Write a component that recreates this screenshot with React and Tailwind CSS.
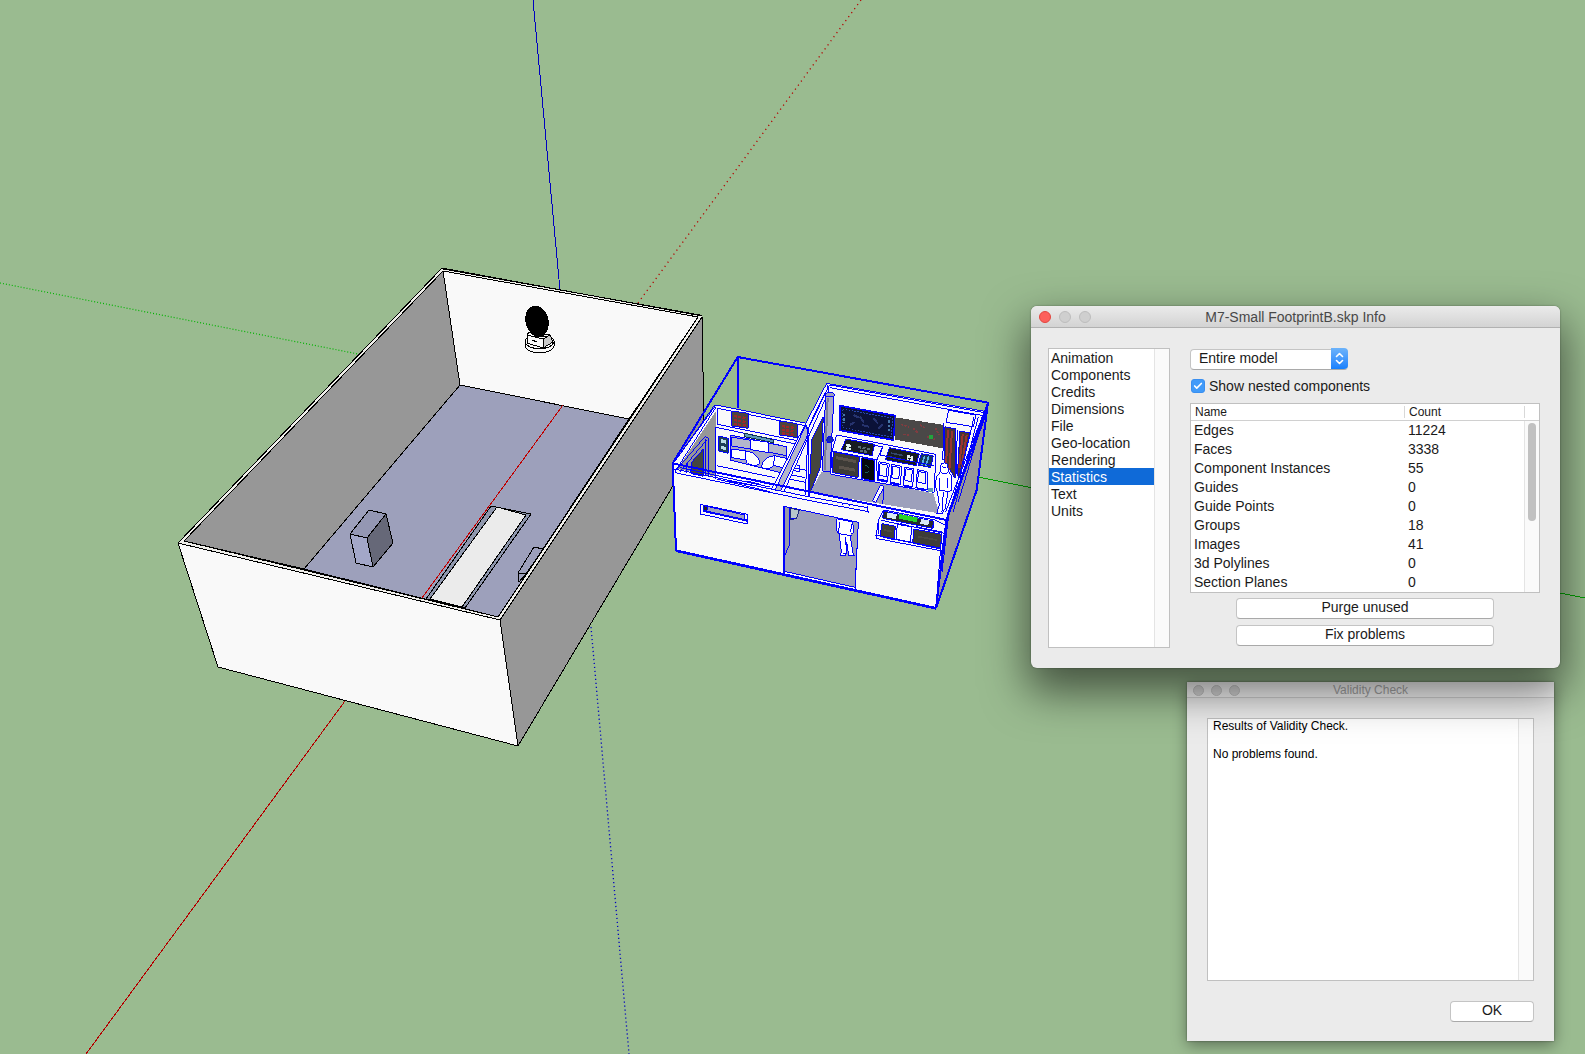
import React, { useState } from 'react';
import { Check } from 'lucide-react';

const SECTIONS = [
  'Animation',
  'Components',
  'Credits',
  'Dimensions',
  'File',
  'Geo-location',
  'Rendering',
  'Statistics',
  'Text',
  'Units',
];

const STATS = [
  ['Edges', '11224'],
  ['Faces', '3338'],
  ['Component Instances', '55'],
  ['Guides', '0'],
  ['Guide Points', '0'],
  ['Groups', '18'],
  ['Images', '41'],
  ['3d Polylines', '0'],
  ['Section Planes', '0'],
];

const Axes = () => (
  <g fill="none" strokeWidth="1">
    <path d="M533 0L560 290" stroke="#0000c0" />
    <g shapeRendering="geometricPrecision">
      <path d="M861 0L638 303" stroke="#b40000" strokeWidth="1.3" strokeDasharray="1.2 3.8" />
      <path d="M0 283L358 354" stroke="#00b400" strokeWidth="1.2" strokeDasharray="1 2" />
      <path d="M591 627L629 1054" stroke="#0000c0" strokeWidth="1.3" strokeDasharray="1.2 2.8" />
    </g>
    <path d="M345 701L86 1054" stroke="#b40000" />
    <path d="M978 477L1585 598" stroke="#00a000" />
  </g>
);

const Room = () => (
  <g stroke="#000" strokeWidth="1" strokeLinejoin="round">
    {/* outer shell and rim */}
    <path d="M442 268L702 316L704 426L674 484L518 746L218 667L178 543Z" fill="#f0efeb" />
    <path d="M500 620L702 317L704 426L674 484L518 746Z" fill="#979797" />
    <path d="M178 543L500 620L518 746L218 667Z" fill="#f9f9f9" />
    {/* inside walls */}
    <path d="M443 271L460 385L304 569L184 541Z" fill="#979797" />
    <path d="M443 271L698 317L629 419L460 385Z" fill="#f9f9f9" />
    <path d="M443 269L700 315" />
    {/* floor */}
    <path d="M460 385L629 419L498 617L304 569Z" fill="#9da0bb" />
    <path d="M443 271L184 541L498 617L698 317" fill="none" />
    <path d="M563 405L422 598" stroke="#c00000" />

    {/* slab in the floor */}
    <path d="M491 506L531 514L465 608L426 599Z" fill="#8f97ad" />
    <path d="M497 507L526 515L462 607L430 599Z" fill="#ebebeb" />

    {/* boxes */}
    <path d="M369 510L386 514L367 538L350 534Z" fill="#9497b3" />
    <path d="M350 534L367 538L373 567L356 563Z" fill="#a3a7c8" />
    <path d="M386 514L393 543L373 567L367 538Z" fill="#666878" />
    <path d="M543 549L534 547L518 573L519 582L526 574Z" fill="#9da0bb" />
    <path d="M518 573L526 574" />

    {/* dish */}
    <path d="M525 341v5c2 9 27 9 29 0v-5c-2-8-27-8-29 0Z" fill="#f9f9f9" />
    <path d="M525 342c3 9 26 9 29 0" fill="none" />
    <path d="M527 334L530 332L550 335L553 342L543 348L527 343Z" fill="#f9f9f9" />
    <path d="M543 339L550 335L553 342L543 348Z" fill="#c8c8c8" />
    <path d="M527 335L543 339M532 340L537 342M531 333L537 337L546 336" />
    <ellipse cx="537" cy="321" rx="11" ry="15" transform="rotate(-14 537 321)" fill="#000" />
  </g>
);

// Drawn on a grid three times finer than the page
const Station = () => (
  <g transform="translate(660 345) scale(0.33333)" stroke="#0000ff" strokeWidth="3" fill="none">
    {/* shell */}
    <path d="M38 358L168 180L440 235L500 115L980 200L950 435L828 790L368 688L48 617Z" fill="#f9f9f9" />
    <path d="M52 372L168 198V395Z" fill="#979797" stroke="none" />
    <path d="M980 200L950 435L828 790L852 560L865 500Z" fill="#979797" />

    {/* left room, back wall */}
    <path d="M172 190L440 243M172 190V238M172 238L436 292M168 247L436 303M168 247V402" />
    <path d="M170 362L345 398M170 382L340 420M170 402L330 440M390 366L440 376M380 400L436 412M370 385L436 398" />
    <path d="M215 198L265 205V250L215 243Z" fill="#4c4542" />
    <path d="M360 228L412 236V278L360 270Z" fill="#4c4542" />
    <path d="M222 213L258 219M222 225L258 231M222 237L258 242M366 243L405 249M366 254L405 260M366 265L405 270" stroke="#a02828" strokeWidth="7" strokeDasharray="9 4" />
    <path d="M176 273L205 280V325L176 318Z" fill="#1c3e58" />
    <path d="M182 282L198 286V296L182 292ZM182 302L198 306V316L182 312Z" fill="#b8dce8" stroke="none" />
    <path d="M254 265L340 284V293L254 275Z" fill="#5c9ab8" stroke="#10304c" />
    <path d="M211 270L380 305V388L211 345Z" fill="#a7a9c6" />
    <path d="M215 276L272 286V312L215 303ZM327 295L380 305V332L327 322Z" fill="#b4b6cc" />
    <path d="M272 284L327 292V323L272 314Z" fill="#fff" />
    <path d="M216 312L258 318V345L216 338ZM342 332L380 340V370L342 362Z" fill="#fff" />
    <path d="M258 318c22 2 38 16 42 38c-14 10-40 4-42-12ZM344 332c-22 2-38 16-39 34c14 10 32 4 36-8Z" fill="#fff" />
    <path d="M397 358L420 363V380L397 376Z" />

    {/* left doorway */}
    <path d="M92 385L96 350L130 312V394Z" fill="#45463f" />
    <path d="M45 380L135 275M60 380L140 285M78 385L82 355M135 275L147 280V392M138 282V390" />
    <path d="M45 380L168 186M38 358L164 180" />

    {/* partition */}
    <path d="M500 118L335 432L372 440L500 180Z" fill="#f9f9f9" stroke="none" />
    <path d="M438 240L345 435L362 438L447 262Z" fill="#b4b6c8" />
    <path d="M500 115L335 432M508 120L440 262M497 160L372 440M497 140L448 240M436 240L444 260L436 450M447 270V455" />
    <path d="M490 215L455 285L447 452L482 365Z" fill="#45463f" />

    {/* right room */}
    <path d="M510 120L985 205M510 128L970 212M500 115L512 160" />
    <path d="M485 380L516 380L640 410L820 445L838 505L450 442Z" fill="#9da0bb" stroke="none" />
    <path d="M497 150L487 378L510 380L522 150Z" fill="#a8aac4" />
    <path d="M503 160L494 375" stroke="#7c7e96" strokeWidth="6" />
    <ellipse cx="510" cy="149" rx="13" ry="7" fill="#9da0bb" />
    <circle cx="510" cy="284" r="10" fill="#1428b4" />
    <path d="M540 182L706 212L700 285L540 256Z" fill="#0b1238" strokeWidth="5" />
    <path d="M548 192L698 220L693 276L548 248Z" stroke="#2848b0" strokeDasharray="5 4" />
    <path d="M580 210l18 8M605 240l22 5M640 220l14 16M655 250l14-12M600 215l12 18M570 240l14-9" stroke="#26336e" strokeWidth="6" />
    <path d="M553 206V235M687 226V258" stroke="#4878a8" strokeWidth="7" strokeDasharray="8 5" />
    <path d="M706 217L852 240L848 310L706 284Z" fill="#4a4847" stroke="none" />
    <path d="M722 238l25 8M760 250l14 14M730 268l22 4M780 240l18 10M800 275l24 8M826 248l12 22" stroke="#803c40" strokeWidth="5" strokeDasharray="7 4" />
    <path d="M806 270h14v12h-14Z" fill="#23a43c" stroke="none" />
    <path d="M866 196L948 210L940 245L858 232Z" fill="#f9f9f9" />
    <path d="M854 245L888 252L885 400L852 345ZM900 258L930 264L900 400L892 390Z" fill="#493535" />
    <path d="M864 255L858 360M876 258L868 375M908 268L897 370M920 270L904 370" stroke="#9a3430" strokeWidth="6" />
    <path d="M852 235L848 345M942 215L930 270L872 490M892 255L888 390M955 215L880 500M972 215L895 470M980 205L865 515M968 212L857 500" />

    {/* consoles */}
    <path d="M530 270L828 328L822 442L512 388L516 318Z" fill="#f9f9f9" />
    <path d="M558 282L644 298L636 332L544 314Z" fill="#181c22" />
    <path d="M558 300l14 3M558 310l14 3" stroke="#e0f4f0" strokeWidth="8" />
    <path d="M595 306L630 313M600 317L622 321" stroke="#5a6c78" strokeWidth="7" strokeDasharray="9 4" />
    <path d="M688 308L778 326L768 362L676 344Z" fill="#181c22" />
    <path d="M742 334l20 4M740 344l20 4" stroke="#e8f0f0" strokeWidth="8" strokeDasharray="8 2" />
    <path d="M692 324L730 332M690 336L728 344" stroke="#32486e" strokeWidth="5" />
    <path d="M784 326L820 332L812 368L774 360Z" fill="#16365c" />
    <path d="M794 332l-8 28M806 334l-8 28" stroke="#58b0e8" strokeWidth="5" />
    <path d="M520 320L598 336L594 398L516 382Z" fill="#3d3b37" />
    <path d="M528 338L588 350M536 366L586 376" stroke="#5a524b" strokeWidth="9" />
    <path d="M606 338L644 346L642 408L603 400Z" fill="#06090c" />
    <path d="M616 360l12 8M614 385l14-6" stroke="#1a5a58" strokeWidth="3" />
    <path d="M640 300L668 306L650 344L652 408M668 306L660 330L822 362M516 318L655 345" />
    <g fill="#f9f9f9">
      <path d="M656 350L688 356L682 412L654 406ZM696 358L726 364L720 420L691 414ZM734 366L762 372L758 426L730 421ZM772 374L802 380L802 434L768 428Z" />
      <path d="M660 356L682 360L678 395L658 391ZM699 364L720 368L716 402L695 398ZM737 371L757 375L754 410L734 406ZM775 379L797 384L797 416L773 412Z" />
    </g>
    <path d="M656 404l24 5M694 414l24 5M732 422l24 5M770 430l24 5" strokeWidth="7" />
    <path d="M804 430h16v12h-16Z" fill="#5c9ab8" stroke="none" />

    {/* front room divider and top edges */}
    <path d="M662 420L672 425L648 472L638 468Z" fill="#f9f9f9" />
    <path d="M672 425L668 478" />
    <path d="M45 383L450 467L625 500M42 372L450 456L622 488M60 368L330 426M200 407l80 15M260 408l40 10" />
    <path d="M622 483L625 504" />

    {/* slot window */}
    <path d="M121 478L262 508V537L121 507Z" fill="#f9f9f9" />
    <path d="M132 482L254 510V526L132 500Z" fill="#9da0bb" />
    <path d="M132 482l12 3l-4 15l-8-2Z" fill="#222" />
    <path d="M132 498L262 527" strokeWidth="6" />

    {/* doorway */}
    <path d="M373 484L595 532L585 727L373 679Z" fill="#9da0bb" />
    <path d="M373 484L390 488L388 600L375 630Z" fill="#9799a8" />
    <path d="M392 490L418 496L410 520L392 524Z" fill="#b8c8cc" stroke="#1c2880" />
    <path d="M388 488V600M392 520h14" />
    <path d="M371 484V686" strokeWidth="6" />
    <path d="M373 690L585 737" />
    <path d="M595 532L585 737" />
    <path d="M547 478c8-6 18-4 22 4" />

    {/* figure in the doorway */}
    <g fill="#fff">
      <path d="M530 521L578 531L582 562L570 570L579 625L585 632H566L560 590L558 625L556 632H541L544 620L538 570L530 558Z" />
      <path d="M538 530L536 566L575 572M575 536L572 560M558 575V600M548 625h12" />
    </g>

    {/* front console */}
    <path d="M670 495L824 525L856 540L846 618L648 580L655 525Z" fill="#f9f9f9" />
    <path d="M670 498L820 528L818 550L668 520Z" fill="#262a2e" />
    <path d="M681 510l28 5M782 529l24 5" stroke="#d8e8f4" strokeWidth="15" />
    <path d="M717 514L772 525" stroke="#28d228" strokeWidth="14" />
    <path d="M666 536L706 544L702 584L660 574ZM762 552L846 568L840 612L758 594Z" fill="#3e3d38" />
    <path d="M672 555l24 5M775 575l56 10" stroke="#4b4943" strokeWidth="5" />
    <path d="M712 538L756 546L750 592L708 584Z" fill="#fff" />
    <path d="M664 526L854 565M720 536L748 542M768 545L850 562M646 570L844 610M655 525V568M820 528V548" />
    <path d="M846 560L828 785M865 520L846 680" />

    {/* standing figure */}
    <g fill="#fff">
      <path d="M843 365C838 350 866 350 863 365L866 380L876 394V435L864 440L856 490L846 506H830L838 480L832 440L825 420L830 394L842 380Z" />
      <path d="M842 380c6 8 18 8 22 0M838 400V435L868 440M850 442L846 500M862 400v30M846 365l12 4" />
    </g>

    {/* selection bounds */}
    <g strokeWidth="6">
      <path d="M38 355L233 36L984 173L950 435L828 790M233 36V190M38 355L860 525L984 173M860 525L828 790M38 355L48 617" />
      <path d="M48 617L368 688L828 790" strokeWidth="8" />
    </g>
  </g>
);

const Light = ({ className, label }) => (
  <button aria-label={label} className={`rounded-full border ${className}`} />
);

const PushButton = ({ children, className = '' }) => (
  <button className={`h-[21px] rounded border border-[#c4c4c4] border-b-[#a9a9a9] bg-white pb-0.5 text-center leading-[17px] ${className}`}>
    {children}
  </button>
);

const InfoWindow = () => {
  const [section, setSection] = useState('Statistics');
  const [nested, setNested] = useState(true);

  return (
    <section className="absolute left-[1031px] top-[306px] z-20 w-[529px] overflow-visible rounded-md bg-[#ebebeb] text-sm text-[#1a1a1a] shadow-[0_20px_44px_4px_rgba(0,0,0,0.55),0_0_2px_rgba(0,0,0,0.4)]">
      <header className="grid h-[22px] grid-cols-[80px_1fr_80px] items-center rounded-t-md border-b border-[#b1b1b1] bg-linear-to-b from-[#ebebeb] to-[#d3d3d3]">
        <div className="flex gap-2 pl-2">
          <Light label="Close" className="size-3 border-[#e2463f] bg-[#fc605c]" />
          <Light label="Minimize" className="size-3 border-[#bdbdbd] bg-[#cfcfcf]" />
          <Light label="Zoom" className="size-3 border-[#bdbdbd] bg-[#cfcfcf]" />
        </div>
        <h1 className="text-center leading-5 text-[#484848]">M7-Small FootprintB.skp Info</h1>
      </header>

      <div className="flex gap-5 py-5 pl-[17px] pr-5">
        <nav className="flex h-[300px] w-[122px] border border-[#c0c0c0] bg-white">
          <ul className="flex-1">
            {SECTIONS.map((name) => (
              <li key={name}>
                <button
                  onClick={() => setSection(name)}
                  className={`block h-[17px] w-full pl-0.5 text-left leading-[18px] ${
                    section === name ? 'bg-[#0f6ad8] text-white' : ''
                  }`}
                >
                  {name}
                </button>
              </li>
            ))}
          </ul>
          <div className="w-[15px] border-l border-[#e4e4e4] bg-[#fafafa]" />
        </nav>

        <div className="flex-1">
          <div className="relative h-[21px] w-[158px]">
            <select
              aria-label="Scope"
              className="h-full w-full appearance-none rounded border border-[#c4c4c4] border-b-[#a9a9a9] bg-white pb-0.5 pl-2 leading-[17px]"
            >
              <option>Entire model</option>
            </select>
            <span className="pointer-events-none absolute inset-y-0 right-0 flex w-[17px] items-center justify-center rounded-r bg-linear-to-b from-[#6cb3fa] to-[#1580fd]">
              <svg width="9" height="13" viewBox="0 0 9 13" fill="none" stroke="#fff" strokeWidth="1.6">
                <path d="M1.5 4.5L4.5 1.5L7.5 4.5M1.5 8.5L4.5 11.5L7.5 8.5" strokeLinecap="round" strokeLinejoin="round" />
              </svg>
            </span>
          </div>

          <label className="mt-[7px] flex h-5 items-center gap-1 pl-px">
            <span className="relative size-3.5">
              <input
                type="checkbox"
                checked={nested}
                onChange={(e) => setNested(e.target.checked)}
                className="peer block size-3.5 appearance-none rounded-[3px] border border-[#b8b8b8] bg-white checked:border-[#3a8ff0] checked:bg-[#419bf9]"
              />
              <Check className="pointer-events-none absolute inset-0 hidden size-3.5 p-0.5 text-white peer-checked:block" strokeWidth={4} />
            </span>
            Show nested components
          </label>

          <div className="mt-[7px] border border-[#c0c0c0] bg-white">
            <table className="w-full table-fixed border-separate border-spacing-0">
              <colgroup>
                <col />
                <col className="w-[120px]" />
                <col className="w-[15px]" />
              </colgroup>
              <thead>
                <tr className="h-[17px] text-left text-xs leading-[15px]">
                  <th className="border-b border-[#d0d0d0] p-0 pl-1 font-normal">Name</th>
                  <th className="border-b border-[#d0d0d0] p-0 font-normal">
                    <div className="h-3 border-l border-[#d8d8d8] pl-1 leading-3">Count</div>
                  </th>
                  <th className="border-b border-[#d0d0d0] p-0">
                    <div className="h-3 border-l border-[#d8d8d8]" />
                  </th>
                </tr>
              </thead>
              <tbody>
                {STATS.map(([name, count], index) => (
                  <tr key={name} className="h-[19px] leading-[19px]">
                    <td className="p-0 pl-[3px]">{name}</td>
                    <td className="p-0 pl-1">{count}</td>
                    {index === 0 && (
                      <td rowSpan={STATS.length} className="border-l border-[#e4e4e4] bg-[#fafafa] p-0 px-[3px] pt-0.5 align-top">
                        <div className="h-[98px] w-2 rounded-full bg-[#c1c1c1]" />
                      </td>
                    )}
                  </tr>
                ))}
              </tbody>
            </table>
          </div>

          <div className="mt-[5px] flex flex-col gap-1.5 px-[46px]">
            <PushButton>Purge unused</PushButton>
            <PushButton>Fix problems</PushButton>
          </div>
        </div>
      </div>
    </section>
  );
};

const ValidityWindow = () => (
  <section className="absolute left-[1187px] top-[682px] z-10 w-[367px] bg-[#ebebeb] text-sm text-[#1a1a1a] shadow-[0_4px_14px_rgba(0,0,0,0.4),0_0_2px_rgba(0,0,0,0.4)]">
    <header className="grid h-4 grid-cols-[60px_1fr_60px] items-center border-b border-[#cfcfcf] bg-[#f4f4f4]">
      <div className="flex gap-[7px] pl-1.5">
        <Light label="Close" className="size-[11px] border-[#c4c4c4] bg-[#d6d6d6]" />
        <Light label="Minimize" className="size-[11px] border-[#c4c4c4] bg-[#d6d6d6]" />
        <Light label="Zoom" className="size-[11px] border-[#c4c4c4] bg-[#d6d6d6]" />
      </div>
      <h2 className="text-center text-xs leading-4 text-[#a4a4a4]">Validity Check</h2>
    </header>
    <div className="p-5 pb-[19px]">
      <div className="flex h-[263px] border border-[#c0c0c0] bg-white">
        <textarea
          readOnly
          aria-label="Results"
          className="flex-1 resize-none pl-[5px] text-xs leading-[14px] text-black outline-none"
          value={'Results of Validity Check.\n\nNo problems found.'}
        />
        <div className="w-[15px] border-l border-[#e4e4e4] bg-[#fafafa]" />
      </div>
      <div className="mt-5 flex justify-end">
        <PushButton className="w-[84px]">OK</PushButton>
      </div>
    </div>
  </section>
);

export default function App() {
  return (
    <main className="relative min-h-screen overflow-hidden bg-[#9abb90] font-['Liberation_Sans',Arial,sans-serif]">
      <svg className="absolute inset-0 h-full w-full" shapeRendering="crispEdges" role="img" aria-label="Model">
        <Axes />
        <Room />
        <Station />
      </svg>
      <InfoWindow />
      <ValidityWindow />
    </main>
  );
}
